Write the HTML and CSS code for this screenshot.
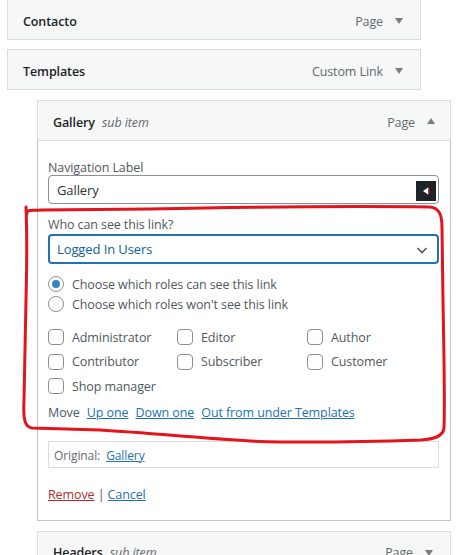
FILE: index.html
```html
<!DOCTYPE html>
<html>
<head>
<meta charset="utf-8">
<link rel="stylesheet" href="styles.css">
</head>
<body>
<div class="page">
  <ul class="menu">
    <li class="item top">
      <div class="bar">
        <span class="title">Contacto</span>
        <span class="type">Page</span>
        <span class="arrow down"></span>
      </div>
    </li>
    <li class="item">
      <div class="bar">
        <span class="title">Templates</span>
        <span class="type">Custom Link</span>
        <span class="arrow down"></span>
      </div>
    </li>
    <li class="item sub">
      <div class="bar open">
        <span class="title">Gallery <em class="subitem">sub item</em></span>
        <span class="type">Page</span>
        <span class="arrow up"></span>
      </div>
      <div class="settings">
        <label class="lbl">Navigation Label</label>
        <div class="input">
          <span class="val">Gallery</span>
          <span class="ext"><svg width="20" height="20" viewBox="0 0 20 20"><rect width="20" height="20" fill="#1d2327"/><polygon points="7,10 12,6.5 12,13.5" fill="#fff"/><rect x="12" y="6.5" width="1.2" height="7" fill="#d63638"/></svg></span>
        </div>
        <label class="lbl who">Who can see this link?</label>
        <div class="select">
          <span class="sval">Logged In Users</span>
          <svg class="chev" width="14" height="14" viewBox="0 0 14 14"><path d="M2.5 5 L7 9.5 L11.5 5" fill="none" stroke="#50575e" stroke-width="1.6"/></svg>
        </div>
        <div class="radios">
          <div class="radio"><span class="rb checked"></span>Choose which roles can see this link</div>
          <div class="radio"><span class="rb"></span>Choose which roles won't see this link</div>
        </div>
        <div class="roles">
          <div class="role"><span class="cb"></span>Administrator</div>
          <div class="role"><span class="cb"></span>Editor</div>
          <div class="role"><span class="cb"></span>Author</div>
          <div class="role"><span class="cb"></span>Contributor</div>
          <div class="role"><span class="cb"></span>Subscriber</div>
          <div class="role"><span class="cb"></span>Customer</div>
          <div class="role"><span class="cb"></span>Shop manager</div>
        </div>
        <div class="move">Move <a href="#">Up one</a> <a href="#">Down one</a> <a href="#">Out from under Templates</a></div>
        <div class="original">Original: <a href="#">Gallery</a></div>
        <div class="actions"><a href="#" class="remove">Remove</a> <span class="sep">|</span> <a href="#">Cancel</a></div>
      </div>
    </li>
    <li class="item sub">
      <div class="bar">
        <span class="title">Headers <em class="subitem">sub item</em></span>
        <span class="type">Page</span>
        <span class="arrow down"></span>
      </div>
    </li>
  </ul>
  <svg class="scribble" width="464" height="555" viewBox="0 0 464 555"><path d="M27,214 C26,209 31,211 42,210 L150,209 C250,207 350,206 430,207 C439,208 442,214 442,228 L443,300 C444,360 445,400 444,428 C443,437 433,439 421,440 C360,442 300,443 250,441 C200,438 150,433 100,430 L32,428 C25,427 23,420 24,400 L26,300 C27,260 27,232 26,207" fill="none" stroke="#e3141b" stroke-width="3" stroke-linecap="round" stroke-linejoin="round"/></svg>
</div>
</body>
</html>
```
FILE: styles.css
```css
html, body { margin: 0; padding: 0; background: #fff; }
body { font-family: "Open Sans", "Noto Sans", sans-serif; font-size: 12.5px; letter-spacing: -0.1px; color: #50575e; }
.page { position: relative; width: 464px; height: 555px; overflow: hidden; }
.menu { list-style: none; margin: -1px 0 0 0; padding: 0 0 0 7px; width: 520px; }
.item { margin: 0 0 9px 0; width: 414px; box-sizing: border-box; }
.item.sub { margin-left: 30px; margin-top: 10px; }
.bar { height: 41px; box-sizing: border-box; border: 1px solid #dcdcde; background: #f6f7f7; display: flex; align-items: center; padding: 3px 17px 0 15px; }
.title { flex: 1; font-weight: 600; color: #1d2327; }
.subitem { font-weight: 400; font-style: italic; color: #646970; margin-left: 4px; }
.type { color: #646970; margin-right: 12px; }
.arrow { width: 0; height: 0; border-left: 4.5px solid transparent; border-right: 4.5px solid transparent; }
.arrow.down { border-top: 6px solid #787c82; }
.arrow.up { border-bottom: 6px solid #787c82; margin-right: -2px; margin-top: -3px; }
.settings { border: 1px solid #c3c4c7; border-top: none; padding: 18px 11px 15px 10px; background: #fff; }
.lbl { display: block; line-height: 17px; color: #50575e; }
.input { height: 27px; border: 1px solid #8c8f94; border-radius: 4px; display: flex; align-items: center; padding: 0 2px 0 8px; margin-top: -1px; }
.val { flex: 1; font-size: 13px; color: #2c3338; }
.ext { display: flex; margin-top: 3px; }
.who { margin-top: 12px; line-height: 18px; }
.select { margin-top: 0; height: 26px; border: 2px solid #2271b1; border-radius: 4px; display: flex; align-items: center; padding: 0 8px 0 7px; }
.sval { flex: 1; font-size: 13px; color: #135e96; }
.chev { margin-top: 1px; }
.radios { margin-top: 10px; }
.radio { display: flex; align-items: center; height: 20px; }
.rb { width: 14px; height: 14px; border: 1px solid #8c8f94; border-radius: 50%; margin-right: 8px; position: relative; flex: none; }
.rb.checked::after { content: ""; position: absolute; left: 3px; top: 3px; width: 8px; height: 8px; border-radius: 50%; background: #3582c4; }
.roles { margin-top: 11px; display: grid; grid-template-columns: 129px 130px 1fr; }
.role { display: flex; align-items: center; height: 24.5px; }
.cb { width: 14px; height: 14px; border: 1px solid #8c8f94; border-radius: 4px; margin-right: 8px; flex: none; }
.move { margin-top: 1px; line-height: 26px; }
a { color: #2271b1; text-decoration: underline; }
.move a { margin-left: 4px; }
.original { margin-top: 15px; border: 1px solid #dcdcde; height: 25px; line-height: 27px; padding-left: 5px; font-size: 12px; color: #646970; }
.original a { margin-left: 3px; }
.actions { margin-top: 17px; line-height: 20px; }
.remove { color: #b32d2e; }
.sep { color: #50575e; }
.scribble { position: absolute; left: 0; top: 0; pointer-events: none; }
```
